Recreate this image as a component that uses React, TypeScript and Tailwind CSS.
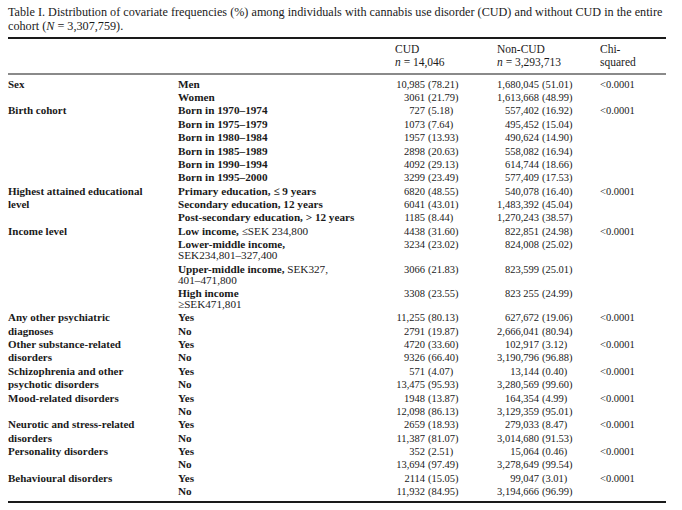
import React from "react";

type Row = {
  sub: React.ReactNode;
  cud: [string, string] | null;
  non: [string, string] | null;
  chi?: string;
};

type Section = { label: string[]; rows: Row[] };

const B = ({ children }: { children: React.ReactNode }) => (
  <span className="font-bold">{children}</span>
);

const sections: Section[] = [
  {
    label: ["Sex"],
    rows: [
      { sub: <B>Men</B>, cud: ["10,985", "(78.21)"], non: ["1,680,045", "(51.01)"], chi: "<0.0001" },
      { sub: <B>Women</B>, cud: ["3061", "(21.79)"], non: ["1,613,668", "(48.99)"] },
    ],
  },
  {
    label: ["Birth cohort"],
    rows: [
      { sub: <B>Born in 1970–1974</B>, cud: ["727", "(5.18)"], non: ["557,402", "(16.92)"], chi: "<0.0001" },
      { sub: <B>Born in 1975–1979</B>, cud: ["1073", "(7.64)"], non: ["495,452", "(15.04)"] },
      { sub: <B>Born in 1980–1984</B>, cud: ["1957", "(13.93)"], non: ["490,624", "(14.90)"] },
      { sub: <B>Born in 1985–1989</B>, cud: ["2898", "(20.63)"], non: ["558,082", "(16.94)"] },
      { sub: <B>Born in 1990–1994</B>, cud: ["4092", "(29.13)"], non: ["614,744", "(18.66)"] },
      { sub: <B>Born in 1995–2000</B>, cud: ["3299", "(23.49)"], non: ["577,409", "(17.53)"] },
    ],
  },
  {
    label: ["Highest attained educational", "level"],
    rows: [
      { sub: <B>Primary education, ≤ 9 years</B>, cud: ["6820", "(48.55)"], non: ["540,078", "(16.40)"], chi: "<0.0001" },
      { sub: <B>Secondary education, 12 years</B>, cud: ["6041", "(43.01)"], non: ["1,483,392", "(45.04)"] },
      { sub: <B>Post-secondary education, &gt; 12 years</B>, cud: ["1185", "(8.44)"], non: ["1,270,243", "(38.57)"] },
    ],
  },
  {
    label: ["Income level"],
    rows: [
      { sub: <><B>Low income,</B> ≤SEK 234,800</>, cud: ["4438", "(31.60)"], non: ["822,851", "(24.98)"], chi: "<0.0001" },
      { sub: <><B>Lower-middle income,</B><br />SEK234,801–327,400</>, cud: ["3234", "(23.02)"], non: ["824,008", "(25.02)"] },
      { sub: <><B>Upper-middle income,</B> SEK327,<br />401–471,800</>, cud: ["3066", "(21.83)"], non: ["823,599", "(25.01)"] },
      { sub: <><B>High income</B><br />≥SEK471,801</>, cud: ["3308", "(23.55)"], non: ["823 255", "(24.99)"] },
    ],
  },
  {
    label: ["Any other psychiatric", "diagnoses"],
    rows: [
      { sub: <B>Yes</B>, cud: ["11,255", "(80.13)"], non: ["627,672", "(19.06)"], chi: "<0.0001" },
      { sub: <B>No</B>, cud: ["2791", "(19.87)"], non: ["2,666,041", "(80.94)"] },
    ],
  },
  {
    label: ["Other substance-related", "disorders"],
    rows: [
      { sub: <B>Yes</B>, cud: ["4720", "(33.60)"], non: ["102,917", "(3.12)"], chi: "<0.0001" },
      { sub: <B>No</B>, cud: ["9326", "(66.40)"], non: ["3,190,796", "(96.88)"] },
    ],
  },
  {
    label: ["Schizophrenia and other", "psychotic disorders"],
    rows: [
      { sub: <B>Yes</B>, cud: ["571", "(4.07)"], non: ["13,144", "(0.40)"], chi: "<0.0001" },
      { sub: <B>No</B>, cud: ["13,475", "(95.93)"], non: ["3,280,569", "(99.60)"] },
    ],
  },
  {
    label: ["Mood-related disorders"],
    rows: [
      { sub: <B>Yes</B>, cud: ["1948", "(13.87)"], non: ["164,354", "(4.99)"], chi: "<0.0001" },
      { sub: <B>No</B>, cud: ["12,098", "(86.13)"], non: ["3,129,359", "(95.01)"] },
    ],
  },
  {
    label: ["Neurotic and stress-related", "disorders"],
    rows: [
      { sub: <B>Yes</B>, cud: ["2659", "(18.93)"], non: ["279,033", "(8.47)"], chi: "<0.0001" },
      { sub: <B>No</B>, cud: ["11,387", "(81.07)"], non: ["3,014,680", "(91.53)"] },
    ],
  },
  {
    label: ["Personality disorders"],
    rows: [
      { sub: <B>Yes</B>, cud: ["352", "(2.51)"], non: ["15,064", "(0.46)"], chi: "<0.0001" },
      { sub: <B>No</B>, cud: ["13,694", "(97.49)"], non: ["3,278,649", "(99.54)"] },
    ],
  },
  {
    label: ["Behavioural disorders"],
    rows: [
      { sub: <B>Yes</B>, cud: ["2114", "(15.05)"], non: ["99,047", "(3.01)"], chi: "<0.0001" },
      { sub: <B>No</B>, cud: ["11,932", "(84.95)"], non: ["3,194,666", "(96.99)"] },
    ],
  },
];

const GRID = "grid grid-cols-[170px_217px_102px_103px_74px]";

export default function App() {
  return (
    <div
      className="w-[682px] h-[510px] bg-white text-[#1a1a1a] overflow-hidden"
      style={{ fontFamily: '"Liberation Serif", "Times New Roman", serif' }}
    >
      <div className="px-[8px] pt-[5px] w-[674px]">
        <p className="text-[12.2px] leading-[14px]">
          Table I. Distribution of covariate frequencies (%) among individuals with cannabis use disorder (CUD) and without CUD in the entire cohort (<i>N</i> = 3,307,759).
        </p>
        <div className="mt-[4px] h-[2px] bg-[#1a1a1a]" />
        <div className={`${GRID} text-[11.5px] leading-[13px] pt-[4px] pb-[4px]`}>
          <div />
          <div />
          <div>
            CUD
            <br />
            <i>n</i> = 14,046
          </div>
          <div>
            Non-CUD
            <br />
            <i>n</i> = 3,293,713
          </div>
          <div>
            Chi-
            <br />
            squared
          </div>
        </div>
        <div className="h-[1.5px] bg-[#8a8a8a]" />
        <div className="pt-[3px]">
          {sections.map((s, si) => (
            <React.Fragment key={si}>
              {s.rows.map((r, ri) => (
                <div key={ri} className={`${GRID} leading-[11px] py-[1.2px]`}>
                  <div className="font-bold whitespace-nowrap text-[11px]">{s.label[ri] ?? ""}</div>
                  <div className="whitespace-nowrap text-[11.2px]">{r.sub}</div>
                  <div className="whitespace-nowrap text-[10.5px]">
                    {r.cud && (
                      <>
                        <span className="inline-block w-[30px] text-right">{r.cud[0]}</span>
                        <span className="ml-[3px]">{r.cud[1]}</span>
                      </>
                    )}
                  </div>
                  <div className="whitespace-nowrap text-[10.5px]">
                    {r.non && (
                      <>
                        <span className="inline-block w-[42px] text-right">{r.non[0]}</span>
                        <span className="ml-[3px]">{r.non[1]}</span>
                      </>
                    )}
                  </div>
                  <div className="whitespace-nowrap text-[10.5px]">{r.chi ?? ""}</div>
                </div>
              ))}
            </React.Fragment>
          ))}
        </div>
        <div className="mt-[3px] h-[2px] bg-[#1a1a1a]" />
      </div>
    </div>
  );
}
